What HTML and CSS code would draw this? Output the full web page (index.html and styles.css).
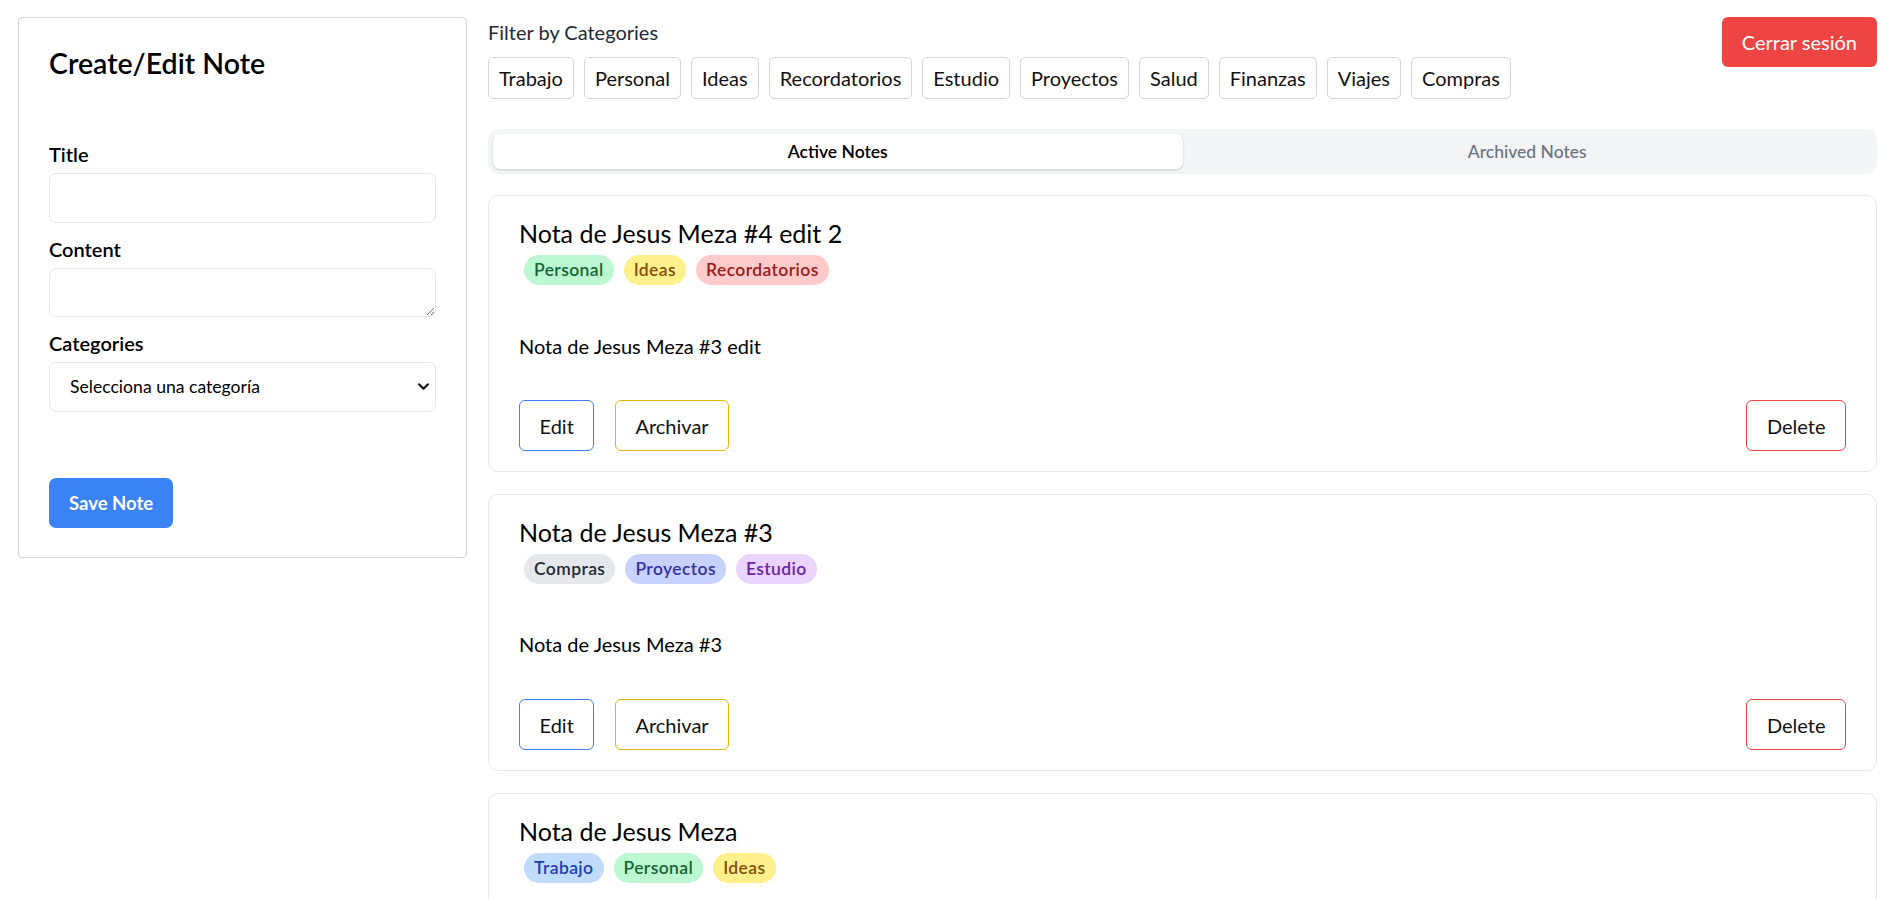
FILE: index.html
```html
<!DOCTYPE html>
<html lang="es">
<head>
<meta charset="utf-8">
<title>Notes</title>
<link rel="stylesheet" href="styles.css">
</head>
<body>
<div class="app">
  <aside class="editor">
    <h2 class="editor-title">Create/Edit Note</h2>
    <form class="editor-form">
      <div class="field">
        <label class="field-label">Title</label>
        <input class="control control-input" type="text">
      </div>
      <div class="field">
        <label class="field-label">Content</label>
        <textarea class="control control-area"></textarea>
      </div>
      <div class="field">
        <label class="field-label">Categories</label>
        <div class="select-wrap">
          <select class="control control-select">
            <option>Selecciona una categoría</option>
          </select>
          <svg class="select-chevron" width="11" height="8" viewBox="0 0 11 8"><path d="M1.2 1.4 L5.5 5.8 L9.8 1.4" fill="none" stroke="#111" stroke-width="2.2" stroke-linecap="round" stroke-linejoin="round"/></svg>
        </div>
      </div>
      <button class="btn-save" type="button">Save Note</button>
    </form>
  </aside>

  <main class="main">
    <header class="topbar">
      <div class="filter">
        <p class="filter-label">Filter by Categories</p>
        <div class="filter-list">
          <button class="chip">Trabajo</button>
          <button class="chip">Personal</button>
          <button class="chip">Ideas</button>
          <button class="chip">Recordatorios</button>
          <button class="chip">Estudio</button>
          <button class="chip">Proyectos</button>
          <button class="chip">Salud</button>
          <button class="chip">Finanzas</button>
          <button class="chip">Viajes</button>
          <button class="chip">Compras</button>
        </div>
      </div>
      <button class="btn-logout">Cerrar sesión</button>
    </header>

    <div class="tabs">
      <button class="tab tab-active">Active Notes</button>
      <button class="tab">Archived Notes</button>
    </div>

    <section class="notes">
      <article class="note">
        <h3 class="note-title">Nota de Jesus Meza #4 edit 2</h3>
        <div class="badges">
          <span class="badge badge-green">Personal</span>
          <span class="badge badge-yellow">Ideas</span>
          <span class="badge badge-red">Recordatorios</span>
        </div>
        <p class="note-content">Nota de Jesus Meza #3 edit</p>
        <div class="note-actions">
          <button class="btn-outline btn-edit">Edit</button>
          <button class="btn-outline btn-archive">Archivar</button>
          <button class="btn-outline btn-delete">Delete</button>
        </div>
      </article>

      <article class="note">
        <h3 class="note-title">Nota de Jesus Meza #3</h3>
        <div class="badges">
          <span class="badge badge-gray">Compras</span>
          <span class="badge badge-indigo">Proyectos</span>
          <span class="badge badge-purple">Estudio</span>
        </div>
        <p class="note-content">Nota de Jesus Meza #3</p>
        <div class="note-actions">
          <button class="btn-outline btn-edit">Edit</button>
          <button class="btn-outline btn-archive">Archivar</button>
          <button class="btn-outline btn-delete">Delete</button>
        </div>
      </article>

      <article class="note">
        <h3 class="note-title">Nota de Jesus Meza</h3>
        <div class="badges">
          <span class="badge badge-blue">Trabajo</span>
          <span class="badge badge-green">Personal</span>
          <span class="badge badge-yellow">Ideas</span>
        </div>
        <p class="note-content">Nota de Jesus Meza</p>
        <div class="note-actions">
          <button class="btn-outline btn-edit">Edit</button>
          <button class="btn-outline btn-archive">Archivar</button>
          <button class="btn-outline btn-delete">Delete</button>
        </div>
      </article>
    </section>
  </main>
</div>
</body>
</html>
```

FILE: styles.css
```css
* { box-sizing: border-box; }

html, body {
  margin: 0;
  height: 100%;
  overflow: hidden;
  background: #fff;
}

body {
  font-family: Lato, "Segoe UI", Roboto, sans-serif;
  font-size: 20px;
  line-height: 30px;
  color: #000;
}

button, input, select, textarea {
  font-family: inherit;
  font-size: inherit;
  line-height: inherit;
  color: inherit;
  margin: 0;
}

button { cursor: pointer; background: none; }

.app {
  display: flex;
  align-items: flex-start;
  gap: 21px;
  padding: 17px 12px 0 18px;
}

/* ---------- editor ---------- */
.editor {
  flex: none;
  width: 449px;
  border: 1px solid #d4d4d8;
  border-radius: 4px;
  padding: 30px 30px 29px;
}

.editor-title {
  margin: 0 0 61px;
  font-size: 28.5px;
  line-height: 30px;
  font-weight: 600;
}

.editor-form {
  display: flex;
  flex-direction: column;
  align-items: flex-start;
}

.field {
  width: 100%;
  margin-bottom: 11px;
  display: flex;
  flex-direction: column;
}

.field-label {
  font-weight: 600;
  margin-bottom: 4px;
}

.control {
  width: 100%;
  border: 1px solid #e5e7eb;
  border-radius: 7px;
  background: #fff;
  outline: none;
}

.control-input { height: 50px; padding: 0 12px; }

.control-area {
  height: 49px;
  padding: 8px 12px;
  resize: vertical;
  display: block;
}

.select-wrap { position: relative; }

.control-select {
  appearance: none;
  -webkit-appearance: none;
  height: 50px;
  padding: 0 30px 0 20px;
  font-size: 17.6px;
  display: block;
}

.select-chevron {
  position: absolute;
  right: 7px;
  top: 21px;
  pointer-events: none;
}

.btn-save {
  margin-top: 55px;
  height: 50px;
  padding: 0 20px;
  border: none;
  border-radius: 7px;
  background: #3b82f6;
  color: #fff;
  font-size: 18.5px;
  font-weight: 700;
}

/* ---------- main ---------- */
.main {
  flex: 1;
  min-width: 0;
}

.topbar {
  display: flex;
  justify-content: space-between;
  align-items: flex-start;
}

.filter-label {
  margin: 0 0 10px;
  color: #1f2937;
}

.filter-list {
  display: flex;
  gap: 10px;
}

.chip {
  padding: 5px 10px;
  border: 1px solid #d1d5db;
  border-radius: 5px;
  background: #fff;
  color: #111;
}

.btn-logout {
  height: 50px;
  padding: 0 20px;
  border: none;
  border-radius: 6px;
  background: #ef4444;
  color: #fff;
}

.tabs {
  margin-top: 30px;
  display: flex;
  padding: 5px;
  background: #f3f4f6;
  border-radius: 10px;
}

.tab {
  flex: 1;
  height: 35px;
  border: none;
  border-radius: 7px;
  font-size: 17.5px;
  line-height: 25px;
  font-weight: 500;
  color: #6b7280;
}

.tab-active {
  background: #fff;
  color: #000;
  font-weight: 600;
  box-shadow: 0 1px 3px rgba(0, 0, 0, 0.12), 0 1px 2px rgba(0, 0, 0, 0.06);
}

.notes {
  margin-top: 20.7px;
  display: flex;
  flex-direction: column;
  gap: 21.2px;
}

.note {
  border: 1px solid #e5e7eb;
  border-radius: 10px;
  padding: 20px 30px;
}

.note-title {
  margin: 0;
  font-size: 25px;
  line-height: 35px;
  font-weight: 400;
}

.badges {
  display: flex;
  margin-top: 4.6px;
}

.badge {
  margin: 0 5px;
  padding: 2.2px 10px;
  border-radius: 999px;
  font-size: 17.5px;
  line-height: 25px;
  font-weight: 600;
  letter-spacing: 0.4px;
}

.badge-green  { background: #bbf7d0; color: #166534; }
.badge-yellow { background: #fef08a; color: #854d0e; }
.badge-red    { background: #fecaca; color: #991b1b; }
.badge-gray   { background: #e5e7eb; color: #1f2937; }
.badge-indigo { background: #c7d2fe; color: #3730a3; }
.badge-purple { background: #e9d5ff; color: #6b21a8; }
.badge-blue   { background: #bfdbfe; color: #1e40af; }

.note-content {
  margin: 45.9px 0 0;
}

.note-actions {
  margin-top: 39.7px;
  display: flex;
  gap: 20.6px;
}

.btn-outline {
  height: 51.2px;
  padding: 0 19.5px;
  border: 1px solid;
  border-radius: 6px;
  background: #fff;
  color: #111;
}

.btn-edit { border-color: #3b82f6; }
.btn-archive { border-color: #eab308; }
.btn-delete { border-color: #ef4444; margin-left: auto; }
```
